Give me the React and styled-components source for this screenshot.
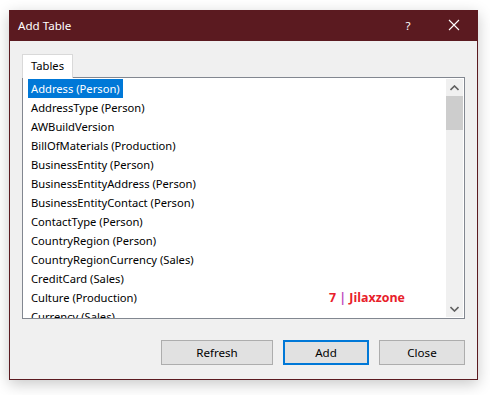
import React from "react";
import styled, { createGlobalStyle } from "styled-components";

const Global = createGlobalStyle`
  html, body { margin: 0; padding: 0; background: #ffffff; }
  body { font-family: "Noto Sans", "Open Sans", sans-serif; font-size: 11.2px; }
`;

const Page = styled.div`
  width: 490px;
  height: 395px;
  padding: 10px 0 0 9px;
  box-sizing: border-box;
`;

const Window = styled.div`
  width: 469px;
  height: 370px;
  box-sizing: border-box;
  border: 1px solid #5b1a20;
  background: #f0f0f0;
  box-shadow: 0 4px 14px rgba(0, 0, 0, 0.22);
  display: flex;
  flex-direction: column;
`;

const TitleBar = styled.div`
  height: 30px;
  box-sizing: border-box;
  padding: 0 0 2px 8px;
  background: #5b1a20;
  color: #ffffff;
  display: flex;
  align-items: center;
  font-size: 11.6px;
`;

const Title = styled.div`
  flex: 1;
`;

const TitleButton = styled.div`
  width: ${(p) => p.w}px;
  height: 28px;
  display: flex;
  align-items: center;
  justify-content: center;
  color: #ffffff;
`;

const Body = styled.div`
  flex: 1;
  padding: 13px 12px 0 12px;
  display: flex;
  flex-direction: column;
`;

const TabStrip = styled.div`
  display: flex;
  height: 23px;
`;

const Tab = styled.div`
  width: 51px;
  box-sizing: border-box;
  height: 24px;
  padding-bottom: 2px;
  background: #ffffff;
  border: 1px solid #d9d9d9;
  border-bottom: none;
  display: flex;
  align-items: center;
  justify-content: center;
  color: #000;
  position: relative;
  z-index: 1;
`;

const ListBox = styled.div`
  width: 443px;
  height: 242px;
  box-sizing: border-box;
  border: 1px solid #828790;
  background: #ffffff;
  display: flex;
  position: relative;
  overflow: hidden;
`;

const Items = styled.div`
  flex: 1;
  padding: 1px 0 0 5px;
  overflow: hidden;
`;

const Item = styled.div`
  height: 19px;
  line-height: 19px;
  white-space: nowrap;
  color: ${(p) => (p.selected ? "#ffffff" : "#000000")};
  background: ${(p) => (p.selected ? "#0078d7" : "transparent")};
  width: max-content;
  padding: 0 3px 0 3px;
`;

const Scrollbar = styled.div`
  width: 17px;
  background: #f0f0f0;
  display: flex;
  flex-direction: column;
  margin: 1px 1px 1px 0;
`;

const Arrow = styled.div`
  height: 17px;
  display: flex;
  align-items: center;
  justify-content: center;
`;

const Track = styled.div`
  flex: 1;
`;

const Thumb = styled.div`
  height: 34px;
  background: #cdcdcd;
`;

const Watermark = styled.div`
  position: absolute;
  left: 306px;
  top: 211px;
  font-weight: bold;
  font-size: 12.4px;
  color: #e8202a;
  font-family: "Open Sans", "Noto Sans", sans-serif;
`;

const Pipe = styled.span`
  color: #c050c0;
`;

const ButtonRow = styled.div`
  display: flex;
  justify-content: flex-end;
  gap: 10px;
  margin-top: 21px;
  width: 443px;
`;

const Button = styled.div`
  width: ${(p) => p.w}px;
  height: 25px;
  box-sizing: border-box;
  padding-bottom: 1px;
  background: #e1e1e1;
  border: ${(p) => (p.primary ? "2px solid #0078d7" : "1px solid #adadad")};
  display: flex;
  align-items: center;
  justify-content: center;
  color: #000;
  font-size: 11.6px;
`;

const items = [
  "Address (Person)",
  "AddressType (Person)",
  "AWBuildVersion",
  "BillOfMaterials (Production)",
  "BusinessEntity (Person)",
  "BusinessEntityAddress (Person)",
  "BusinessEntityContact (Person)",
  "ContactType (Person)",
  "CountryRegion (Person)",
  "CountryRegionCurrency (Sales)",
  "CreditCard (Sales)",
  "Culture (Production)",
  "Currency (Sales)",
];

export default function App() {
  return (
    <>
      <Global />
      <Page>
        <Window>
          <TitleBar>
            <Title>Add Table</Title>
            <TitleButton w={46}>?</TitleButton>
            <TitleButton w={46}>
              <svg width="12" height="12" viewBox="0 0 12 12">
                <path d="M1 1 L11 11 M11 1 L1 11" stroke="#fff" strokeWidth="1.1" />
              </svg>
            </TitleButton>
          </TitleBar>
          <Body>
            <TabStrip>
              <Tab>Tables</Tab>
            </TabStrip>
            <ListBox>
              <Items>
                {items.map((t, i) => (
                  <Item key={t} selected={i === 0}>
                    {t}
                  </Item>
                ))}
              </Items>
              <Scrollbar>
                <Arrow>
                  <svg width="9" height="6" viewBox="0 0 9 6">
                    <path d="M0.5 5 L4.5 1 L8.5 5" fill="none" stroke="#606060" strokeWidth="1.6" />
                  </svg>
                </Arrow>
                <Thumb />
                <Track />
                <Arrow>
                  <svg width="9" height="6" viewBox="0 0 9 6">
                    <path d="M0.5 1 L4.5 5 L8.5 1" fill="none" stroke="#606060" strokeWidth="1.6" />
                  </svg>
                </Arrow>
              </Scrollbar>
              <Watermark>
                7 <Pipe>|</Pipe> Jilaxzone
              </Watermark>
            </ListBox>
            <ButtonRow>
              <Button w={112}>Refresh</Button>
              <Button w={86} primary>Add</Button>
              <Button w={86}>Close</Button>
            </ButtonRow>
          </Body>
        </Window>
      </Page>
    </>
  );
}
